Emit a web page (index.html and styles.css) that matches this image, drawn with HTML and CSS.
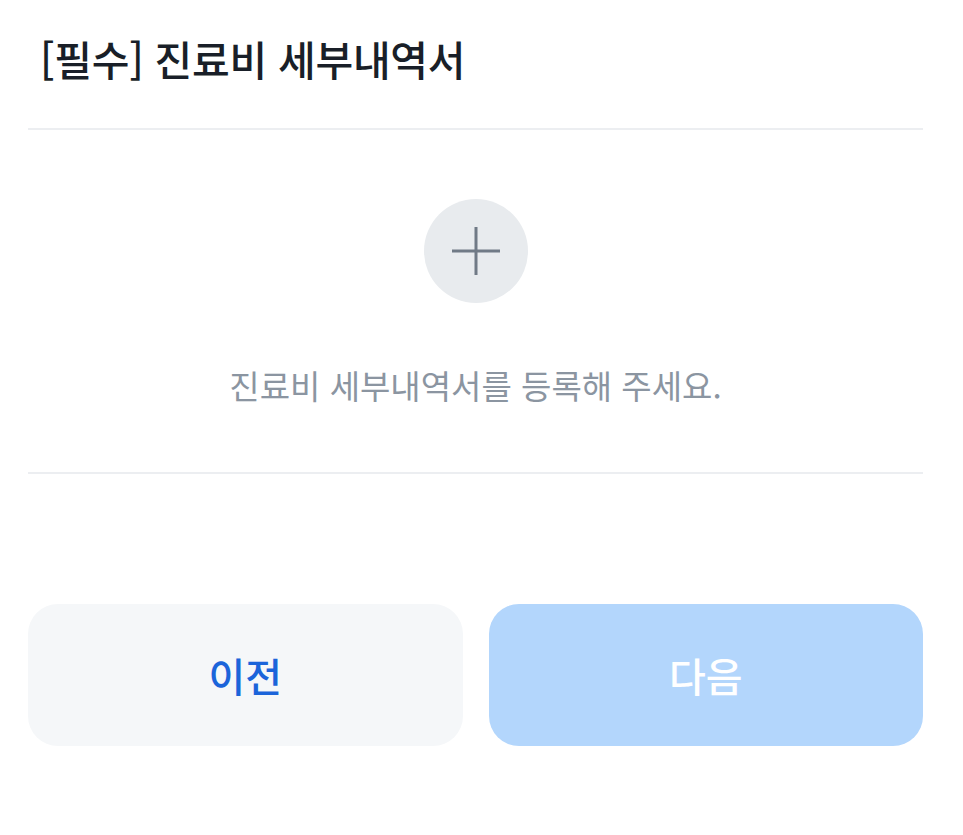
FILE: index.html
```html
<!DOCTYPE html>
<html lang="ko">
<head>
    <meta charset="UTF-8">
    <meta name="viewport" content="width=device-width, initial-scale=1.0">
    <title>진료비 세부내역서</title>
    <link rel="stylesheet" href="styles.css">
</head>
<body>
    <div class="page">
        <h1 class="title">[필수] 진료비 세부내역서</h1>

        <div class="upload">
            <button class="add-btn" type="button" aria-label="추가">
                <svg width="50" height="50" viewBox="0 0 50 50">
                    <path d="M25 1 V49 M1 25 H49" stroke="#707a86" stroke-width="3" fill="none"/>
                </svg>
            </button>
            <p class="hint">진료비 세부내역서를 등록해 주세요.</p>
        </div>

        <div class="actions">
            <button class="btn btn-prev" type="button">이전</button>
            <button class="btn btn-next" type="button" disabled>다음</button>
        </div>
    </div>
</body>
</html>
```

FILE: styles.css
```css
body {
    margin: 0;
    background: #ffffff;
    font-family: "Noto Sans CJK KR", "Noto Sans", sans-serif;
}
.page {
    padding: 0 40px 0 28px;
}
.title {
    margin: 0;
    padding: 0 12px;
    height: 128px;
    line-height: 116px;
    box-sizing: border-box;
    font-size: 41px;
    font-weight: 500;
    color: #191f28;
    letter-spacing: -0.3px;
}
.upload {
    border-top: 2px solid #eceef1;
    border-bottom: 2px solid #eceef1;
    display: flex;
    flex-direction: column;
    align-items: center;
    padding: 69px 0 0;
    height: 346px;
    box-sizing: border-box;
}
.add-btn {
    width: 104px;
    height: 104px;
    border-radius: 50%;
    border: none;
    background: #e8ebee;
    display: flex;
    align-items: center;
    justify-content: center;
    padding: 0;
}
.hint {
    margin: 58px 0 0;
    font-size: 33px;
    line-height: 48px;
    color: #8b95a1;
}
.actions {
    display: flex;
    gap: 26px;
    margin-top: 130px;
}
.btn {
    flex: 1;
    height: 142px;
    border: none;
    border-radius: 30px;
    font-family: inherit;
    font-size: 40px;
    font-weight: 500;
}
.btn-prev {
    background: #f5f7f9;
    color: #1b64da;
}
.btn-next {
    background: #b3d6fc;
    color: #ffffff;
}
```
